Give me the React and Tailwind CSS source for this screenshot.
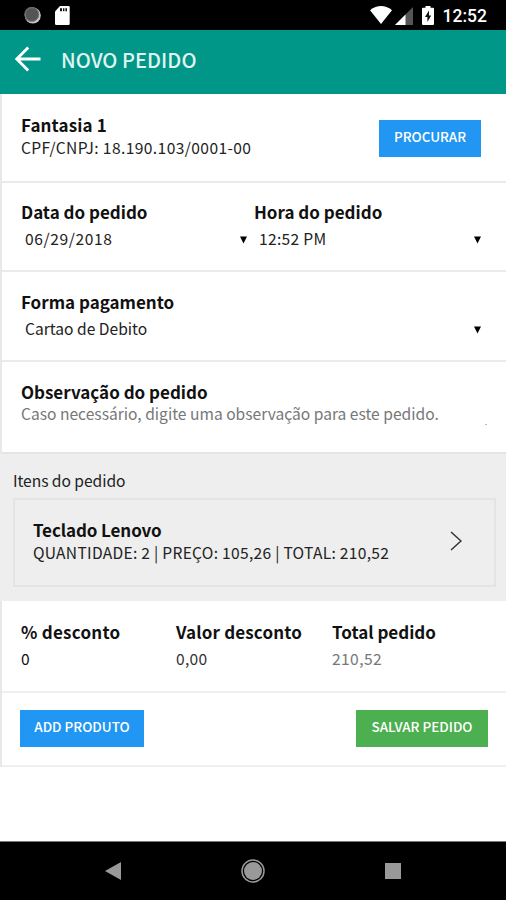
function Title({ children, className = "" }) {
  return <div className={`text-[17px] leading-[22px] font-bold ${className}`}>{children}</div>;
}

function Value({ children, className = "text-[#222]" }) {
  return <div className={`text-[15.6px] leading-[22px] ${className}`}>{children}</div>;
}

function Caret() {
  return (
    <svg width="7" height="8" viewBox="0 0 7 8" className="mt-[3px] shrink-0">
      <path d="M0 0.5H7L3.5 7.5Z" fill="#000" />
    </svg>
  );
}

function Button({ children, className = "" }) {
  return (
    <button className={`h-[37px] pb-[4px] text-[13.5px] leading-none font-medium text-white ${className}`}>
      {children}
    </button>
  );
}

function StatusBar() {
  return (
    <div className="flex h-[30px] items-center bg-black pr-[19px] pl-6 text-white">
      <svg width="17" height="17" viewBox="0 0 17 17">
        <circle cx="8.8" cy="8.5" r="8" fill="#c8c8c8" />
        <circle cx="7.6" cy="7.2" r="7.4" fill="#555" />
        <circle cx="8" cy="7.5" r="6.8" fill="none" stroke="#777" strokeWidth="1" />
      </svg>
      <svg width="15" height="19" viewBox="0 0 15 19" className="ml-[14px]">
        <path d="M5 0H13.5Q14.7 0 14.7 1.2V17.5Q14.7 19 13.5 19H1.3Q0 19 0 17.5V5.5Z" fill="#fff" />
        <path d="M5 2.2H7V5.2H5ZM8 2.2H9.4V5.2H8ZM10.4 2.2H12V5.2H10.4Z" fill="#111" />
      </svg>
      <div className="flex-1" />
      <svg width="22" height="18" viewBox="0 0 22 18">
        <path d="M0 4.2Q11 -4 22 4.2L11 18Z" fill="#fff" />
      </svg>
      <svg width="18" height="18" viewBox="0 0 18 18" className="mt-px ml-[3px]">
        <path d="M18 0V18H0Z" fill="#555" />
        <path d="M10.5 7.5V18H0Z" fill="#fff" />
      </svg>
      <svg width="12" height="19" viewBox="0 0 12 19" className="ml-[9px]">
        <path d="M3.5 0H8.5V1.8H11Q12 1.8 12 2.8V18Q12 19 11 19H1Q0 19 0 18V2.8Q0 1.8 1 1.8H3.5Z" fill="#fff" />
        <path d="M7 4.5L3 11H5.4V16L9.2 9.4H7Z" fill="#111" />
      </svg>
      <span className="mt-[2px] ml-[9px] font-['Roboto',sans-serif] text-[17.5px] leading-5 font-medium">12:52</span>
    </div>
  );
}

export default function App() {
  return (
    <div className="flex h-[900px] w-[506px] flex-col overflow-hidden bg-white font-['Noto_Sans_CJK_SC','Noto_Sans',sans-serif] text-[#111]">
      <StatusBar />

      <header className="flex h-16 items-center bg-[#009688] pl-[15px] text-white">
        <svg width="26" height="26" viewBox="0 0 26 26" fill="none" stroke="#fff" strokeWidth="2.8" className="-mt-[6px]">
          <path d="M25.5 13H2M13.2 1.5L1.8 13L13.2 24.5" />
        </svg>
        <h1 className="-mt-[5px] ml-[20px] text-[20px] leading-6 font-medium tracking-[0.05px] text-[#e0f4f1]">NOVO PEDIDO</h1>
      </header>

      <main className="flex flex-col border-l-2 border-[#e8e8e8]">
        <section className="flex h-[89px] justify-between border-b-2 border-[#ebebeb] pr-[25px] pl-[19px]">
          <div className="pt-5">
            <Title className="tracking-[0.15px]">Fantasia 1</Title>
            <Value className="tracking-[0.4px] text-[#222]">CPF/CNPJ: 18.190.103/0001-00</Value>
          </div>
          <Button className="mt-[26px] w-[102px] bg-[#2196f3]">PROCURAR</Button>
        </section>

        <section className="flex h-[89px] border-b-2 border-[#ebebeb] pt-[18px] pr-[25px] pl-[19px]">
          <div className="w-[233px]">
            <Title>Data do pedido</Title>
            <div className="mt-1 flex items-center justify-between pr-[7px] pl-1">
              <Value className="tracking-[0.6px] text-[#222]">06/29/2018</Value>
              <Caret />
            </div>
          </div>
          <div className="flex-1">
            <Title>Hora do pedido</Title>
            <div className="mt-1 flex items-center justify-between pl-[5px]">
              <Value className="tracking-[0.3px] text-[#222]">12:52 PM</Value>
              <Caret />
            </div>
          </div>
        </section>

        <section className="h-[90px] border-b-2 border-[#ebebeb] pt-[19px] pr-[25px] pl-[19px]">
          <Title>Forma pagamento</Title>
          <div className="mt-1 flex items-center justify-between pl-1">
            <Value>Cartao de Debito</Value>
            <Caret />
          </div>
        </section>

        <section className="relative h-[92px] border-b-2 border-[#e4e4e4] pt-[19px] pl-[19px]">
          <Title>Observação do pedido</Title>
          <Value className="-mt-px text-[#777]">Caso necessário, digite uma observação para este pedido.</Value>
          <span className="absolute right-[19px] bottom-[27px] h-px w-[2px] bg-[#bbb]" />
        </section>
      </main>

      <section className="h-[147px] bg-[#eeeeee] pt-[15px] pr-[10px] pl-[13px]">
        <Value className="tracking-[-0.05px] text-[#222]">Itens do pedido</Value>
        <div className="mt-[7px] flex h-[89px] items-start justify-between border-2 border-[#e4e4e4] pt-[19px] pr-[32px] pl-[18px]">
          <div>
            <Title className="tracking-[-0.1px]">Teclado Lenovo</Title>
            <Value className="tracking-[0.28px] text-[#222]">QUANTIDADE: 2 | PREÇO: 105,26 | TOTAL: 210,52</Value>
          </div>
          <svg width="12" height="20" viewBox="0 0 12 20" fill="none" stroke="#333" strokeWidth="1.5" className="mt-[12px]">
            <path d="M1 1L11 10L1 19" />
          </svg>
        </div>
      </section>

      <div className="flex flex-col border-l-2 border-[#e8e8e8]">
        <section className="flex h-[92px] border-b-2 border-[#efefef] pt-5 pl-[19px]">
          <div className="w-[155px]">
            <Title className="tracking-[0.25px]">% desconto</Title>
            <Value className="mt-[4px] text-[#111]">0</Value>
          </div>
          <div className="w-[156px]">
            <Title className="tracking-[0.15px]">Valor desconto</Title>
            <Value className="mt-[4px] tracking-[0.3px] text-[#333]">0,00</Value>
          </div>
          <div>
            <Title>Total pedido</Title>
            <Value className="mt-[4px] tracking-[0.4px] text-[#777]">210,52</Value>
          </div>
        </section>

        <section className="flex h-[74px] justify-between border-b-2 border-[#efefef] pt-[17px] pr-[18px] pl-[18px]">
          <Button className="w-[124px] bg-[#2196f3]">ADD PRODUTO</Button>
          <Button className="w-[132px] bg-[#4caf50]">SALVAR PEDIDO</Button>
        </section>
      </div>

      <nav className="mt-auto flex h-[59px] items-center border-t border-[#777] bg-black pr-[105px] pl-[105px]">
        <svg width="16" height="18" viewBox="0 0 16 18">
          <path d="M16 0V18L0 9Z" fill="#999" />
        </svg>
        <div className="flex-1" />
        <svg width="24" height="24" viewBox="0 0 24 24">
          <circle cx="12" cy="12" r="11" fill="none" stroke="#999" strokeWidth="1.5" />
          <circle cx="12" cy="12" r="9" fill="#999" />
        </svg>
        <div className="flex-1" />
        <span className="h-4 w-4 bg-[#999]" />
      </nav>
    </div>
  );
}
